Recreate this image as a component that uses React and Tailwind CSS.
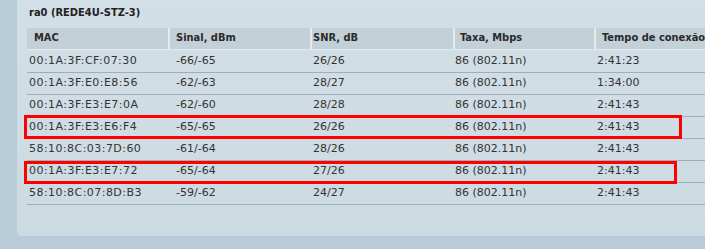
const rows = [
  ["00:1A:3F:CF:07:30", "-66/-65", "26/26", "86 (802.11n)", "2:41:23"],
  ["00:1A:3F:E0:E8:56", "-62/-63", "28/27", "86 (802.11n)", "1:34:00"],
  ["00:1A:3F:E3:E7:0A", "-62/-60", "28/28", "86 (802.11n)", "2:41:43"],
  ["00:1A:3F:E3:E6:F4", "-65/-65", "26/26", "86 (802.11n)", "2:41:43"],
  ["58:10:8C:03:7D:60", "-61/-64", "28/26", "86 (802.11n)", "2:41:43"],
  ["00:1A:3F:E3:E7:72", "-65/-64", "27/26", "86 (802.11n)", "2:41:43"],
  ["58:10:8C:07:8D:B3", "-59/-62", "24/27", "86 (802.11n)", "2:41:43"],
];

const headers = ["MAC", "Sinal, dBm", "SNR, dB", "Taxa, Mbps", "Tempo de conexão"];
const headPad = ["pl-[7px]", "pl-[6px]", "pl-[1px]", "pl-[5px]", "pl-[6px]"];
const cellPad = ["pl-[2px] tracking-[0.45px]", "pl-[8px]", "pl-[3px]", "pl-[2px]", "pl-[3px]"];
const cols = "grid grid-cols-[141px_142px_143px_141px_143px]";

export default function App() {
  return (
    <div className="relative w-[705px] h-[249px] overflow-hidden bg-[#b7cbd8] font-['DejaVu_Sans',Verdana,sans-serif] text-[11px] text-[#333]">
      <div className="ml-[17px] w-[730px] h-[236px] rounded-bl-[4px] bg-gradient-to-b from-[#d3dfe6] to-[#ccdae2]">
        <div className="pl-[12px] pt-[5px] h-[28px] font-['DejaVu_Sans_Condensed','DejaVu_Sans',sans-serif] font-stretch-condensed font-bold text-[#222] leading-[16px]">
          ra0 (REDE4U-STZ-3)
        </div>
        <div className="ml-[10px] w-[710px]">
          <div className={`${cols} h-[22px] bg-[#c3d0d8] font-['DejaVu_Sans_Condensed','DejaVu_Sans',sans-serif] font-stretch-condensed font-bold text-[#2a2a2a] border-b border-[#e3eaee]`}>
            {headers.map((h, i) => (
              <div key={h} className={`flex items-center whitespace-nowrap overflow-hidden ${headPad[i]} ${i > 0 ? "border-l-[2px] border-[#e4ebef]" : ""}`}>
                {h}
              </div>
            ))}
          </div>
          {rows.map((r, ri) => (
            <div key={r[0]} className={`${cols} ${ri === 0 ? "h-[23px]" : "h-[22px]"} border-b border-[#a3adb5]`}>
              {r.map((c, i) => (
                <div key={i} className={`flex items-center whitespace-nowrap ${cellPad[i]}`}>{c}</div>
              ))}
            </div>
          ))}
        </div>
      </div>
      <div className="absolute left-[24px] top-[115px] w-[658px] h-[24px] border-[3px] border-[#ff0000]" />
      <div className="absolute left-[24px] top-[161px] w-[653px] h-[23px] border-[3px] border-[#ff0000]" />
    </div>
  );
}
